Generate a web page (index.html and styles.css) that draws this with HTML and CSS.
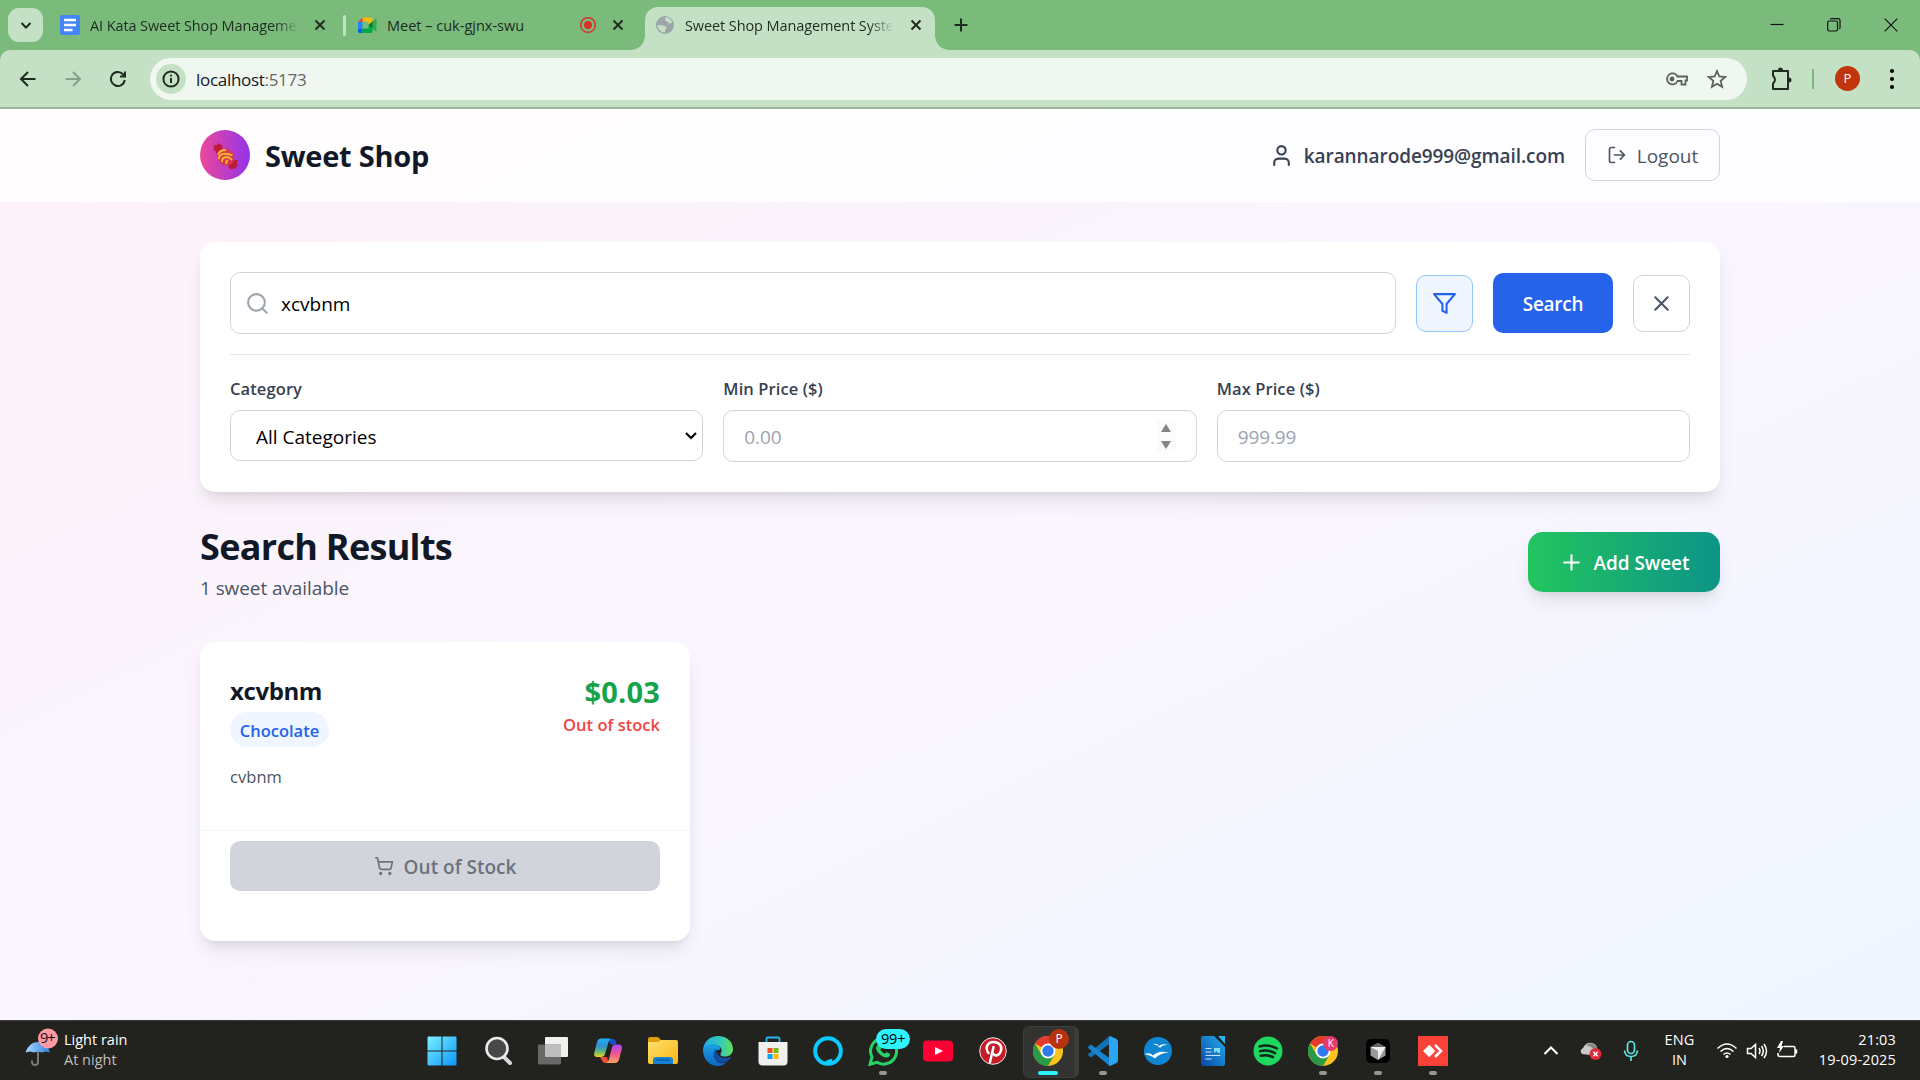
FILE: index.html
```html
<!DOCTYPE html>
<html lang="en">
<head>
<meta charset="utf-8">
<title>Sweet Shop Management System</title>
<link rel="stylesheet" href="styles.css">
</head>
<body>
<svg class="defs" width="0" height="0">
  <defs>
    <symbol id="x" viewBox="0 0 24 24"><path d="M18 6 6 18M6 6l12 12"/></symbol>
    <symbol id="chrome" viewBox="0 0 30 30">
      <circle cx="15" cy="15" r="15" fill="#fcc31e"/>
      <path d="M15 15 2 7.5A15 15 0 0 1 28 7.5H15Z" fill="#e33b2e"/>
      <path d="M2 7.5A15 15 0 0 0 15 30L21.500 18.750 15 15 8.500 18.750Z" fill="#2a9a47"/>
      <circle cx="15" cy="15" r="7.500" fill="#fff"/>
      <circle cx="15" cy="15" r="5.700" fill="#3079ee"/>
    </symbol>
  </defs>
</svg>

<div class="tabstrip">
  <button class="tab-search"><svg width="20" height="20" viewBox="0 0 20 20" class="dark"><path d="m5.500 8 4.500 4.500L14.500 8"/></svg></button>
  <div class="tab tab-docs">
    <svg width="20" height="20" viewBox="0 0 20 20"><rect width="20" height="20" rx="2" fill="#4285f4"/><path d="M4 5h12M4 10h12M4 15h8.500" stroke="#fff" stroke-width="2.400"/></svg>
    <span class="tab-title fade">AI Kata Sweet Shop Manageme</span>
    <svg class="close dark" width="18" height="18"><use href="#x"/></svg>
  </div>
  <i class="tab-sep"></i>
  <div class="tab tab-meet">
    <svg width="20" height="18" viewBox="0 0 20 18"><path d="M4.500 1.500H13q1.500 0 1.500 1.500v4l-4 2V5.500h-6z" fill="#fbbc04"/><path d="M0 6 4.500 1.500V6z" fill="#ea4335"/><path d="M0 6h4.500v7H0z" fill="#2684fc"/><path d="M0 13h4.500v4H1.500Q0 17 0 15.500z" fill="#0066da"/><path d="M4.500 12.500h6V9l4 3v3.500q0 1.500-1.500 1.500H4.500z" fill="#00ac47"/><path d="m10.500 9 7-6q1-.700 1 .500v11q0 1.200-1 .500z" fill="#34a853"/><path d="m10.500 9 4-3.500v7z" fill="#00832d"/></svg>
    <span class="tab-title">Meet – cuk-gjnx-swu</span>
    <svg width="18" height="18" viewBox="0 0 18 18"><circle cx="9" cy="9" r="7.300" fill="none" stroke="#d93025" stroke-width="1.500"/><circle cx="9" cy="9" r="4" fill="#d93025"/></svg>
    <svg class="close dark" width="18" height="18"><use href="#x"/></svg>
  </div>
  <div class="tab tab-active">
    <svg width="20" height="20" viewBox="0 0 20 20"><circle cx="10" cy="10" r="9" fill="#9ca5a8"/><path d="M10.500 2c3 0 6 2.500 6.800 6-1.500-.500-1.800 1-3.300.500-1.200-.500-.500-2-2-2S9.500 5 10.500 4zM2.500 10l5 .300c1.500 0 2 1 3 1.500s1.500 1.200.500 2.200-1 1-1 3.500C6 17.500 2.800 14.500 2.500 10z" fill="#c5e1c5"/></svg>
    <span class="tab-title fade">Sweet Shop Management Syste</span>
    <svg class="close dark" width="18" height="18"><use href="#x"/></svg>
  </div>
  <svg class="new-tab dark" width="20" height="20" viewBox="0 0 20 20"><path d="M10 3.500v13M3.500 10h13"/></svg>
  <div class="window-controls">
    <svg width="14" height="14" viewBox="0 0 14 14"><path d="M.500 6.500h13"/></svg>
    <svg width="14" height="14" viewBox="0 0 14 14"><rect x=".700" y="3" width="9.800" height="10" rx="1.500"/><path d="M3 1Q3.500.700 4.500.700H11q2 0 2 2V9.500q0 1-.500 1.500"/></svg>
    <svg width="14" height="14" viewBox="0 0 14 14"><path d="m.700.700 12.600 12.600M13.300.700.700 13.300"/></svg>
  </div>
</div>

<div class="toolbar">
  <div class="nav">
    <svg class="dark" width="20" height="20" viewBox="0 0 20 20"><path d="M17.500 10H3.500M10 3l-7 7 7 7"/></svg>
    <svg class="muted" width="20" height="20" viewBox="0 0 20 20"><path d="M2.500 10h14M10 3l7 7-7 7"/></svg>
    <svg class="dark" width="20" height="20" viewBox="0 0 20 20"><path d="M16.800 11A7 7 0 1 1 15 5.200l1.500 1.800M17 2.500V7.500H12"/></svg>
  </div>
  <div class="omnibox">
    <span class="site-info"><svg class="dark" width="20" height="20" viewBox="0 0 20 20"><circle cx="10" cy="10" r="7.600"/><path d="M10 9v5M10 5.800v1.700"/></svg></span>
    <span class="url">localhost<em>:5173</em></span>
    <svg class="grey" width="24" height="20" viewBox="0 0 24 20"><path d="M12.500 7.500H22V11.500H20.500V15.500H16.500V12H12.600A5.500 5.500 0 1 1 12.500 7.500Z"/><circle cx="7" cy="10" r="1.500" fill="#5a635b"/></svg>
    <svg class="grey star" width="20" height="20" viewBox="0 0 20 20"><path d="m10 2 2.300 5.500 6 .500-4.600 3.900 1.400 5.900L10 14.700l-5.100 3.100 1.400-5.900L1.700 8l6-.500z"/></svg>
  </div>
  <svg class="dark puzzle" width="24" height="28" viewBox="0 0 24 28"><path d="M4 6h15v18H4v-5.500q4-3.500 0-8z" stroke-linejoin="round"/><path d="M9 5a2.500 2.500 0 0 1 5 0zM20 12.500a2.500 2.500 0 0 1 0 5z" fill="#1f2b20" stroke="none"/></svg>
  <i class="bar-sep"></i>
  <span class="profile">P</span>
  <svg width="6" height="24" viewBox="0 0 6 24"><circle cx="3" cy="4" r="2.100"/><circle cx="3" cy="12" r="2.100"/><circle cx="3" cy="20" r="2.100"/></svg>
</div>

<div class="page">
  <header class="site-header">
    <div class="container header-row">
      <div class="brand">
        <span class="logo"><svg width="28" height="30" viewBox="0 0 28 30">
          <path d="m9.500 14-5-.500.500-2.500-3-1 1.500-2.500L2.500 5 6 5.200 7 3l2.500 1.500L11.500 5l-.500 2.500 2 3zM19 20.500l7.500-.500-.700 3.500 1 2-1.500 1.500-1.300 2-2.500-.500-2.500 1-1.500-3z" fill="#be1a3a"/>
          <ellipse cx="14.700" cy="17" rx="9.200" ry="8" transform="rotate(45 14.700 17)" fill="#d9354c"/>
          <path d="M7 14.500q1.500-4.500 8-4.500M7.700 19.200q.300-5.500 6.300-5.500 4.500 0 7.500 1.800M11 22q-.500-4.500 4.500-5 3 0 5.500 3M15.500 24q-1-3 1.500-3.500" fill="none" stroke="#f9b836" stroke-width="1.900"/></svg></span>
        <h1>Sweet Shop</h1>
      </div>
      <div class="account">
        <svg class="icon" width="25" height="25" viewBox="0 0 24 24"><path d="M19 21v-2a4 4 0 0 0-4-4H9a4 4 0 0 0-4 4v2"/><circle cx="12" cy="7" r="4"/></svg>
        <span class="email">karannarode999@gmail.com</span>
        <button class="logout"><svg class="icon" width="20" height="20" viewBox="0 0 24 24"><path d="M9 21H5a2 2 0 0 1-2-2V5a2 2 0 0 1 2-2h4M16 17l5-5-5-5M21 12H9"/></svg><span>Logout</span></button>
      </div>
    </div>
  </header>

  <main class="container">
    <section class="card search-card">
      <div class="search-row">
        <label class="field search-field">
          <svg class="icon" width="25" height="25" viewBox="0 0 24 24"><circle cx="11" cy="11" r="8"/><path d="m21 21-4.300-4.300"/></svg>
          <span>xcvbnm</span>
        </label>
        <button class="square filter"><svg class="icon" width="25" height="25" viewBox="0 0 24 24"><path d="M22 3H2l8 9.460V19l4 2v-8.540L22 3z"/></svg></button>
        <button class="search-btn">Search</button>
        <button class="square"><svg class="icon" width="25" height="25"><use href="#x"/></svg></button>
      </div>
      <div class="filters">
        <div><label>Category</label><div class="field select"><span>All Categories</span><svg width="14" height="10" viewBox="0 0 14 10"><path d="m2 2 5 5 5-5" fill="none" stroke="#000" stroke-width="2.200"/></svg></div></div>
        <div><label>Min Price ($)</label><div class="field number"><span>0.00</span><i class="spinner"></i></div></div>
        <div><label>Max Price ($)</label><div class="field number"><span>999.99</span></div></div>
      </div>
    </section>

    <section class="results-head">
      <div>
        <h2>Search Results</h2>
        <p>1 sweet available</p>
      </div>
      <button class="add"><svg class="icon" width="25" height="25" viewBox="0 0 24 24"><path d="M5 12h14M12 5v14"/></svg><span>Add Sweet</span></button>
    </section>

    <article class="card product">
      <div class="product-body">
        <div class="product-top">
          <div><h3>xcvbnm</h3><span class="badge">Chocolate</span></div>
          <div class="price-col"><b>$0.03</b><span>Out of stock</span></div>
        </div>
        <p>cvbnm</p>
      </div>
      <div class="product-foot">
        <button class="buy"><svg class="icon" width="20" height="20" viewBox="0 0 24 24"><circle cx="8" cy="21" r="1"/><circle cx="19" cy="21" r="1"/><path d="M2.050 2.050h2l2.660 12.420a2 2 0 0 0 2 1.580h9.780a2 2 0 0 0 1.950-1.570l1.650-7.430H5.120"/></svg><span>Out of Stock</span></button>
      </div>
    </article>
  </main>
</div>

<footer class="taskbar">
  <div class="weather">
    <svg width="36" height="40" viewBox="0 0 36 40"><defs><linearGradient id="um"><stop stop-color="#a8d8ff"/><stop offset="1" stop-color="#2a83dc"/></linearGradient></defs><path d="M14 20v14a3 3 0 0 1-6 0v-1.500" fill="none" stroke="#77797a" stroke-width="2"/><path d="M1.500 24.500C4 17 9 14 14 14s10 3 12 10.500l-4-1-4 1-4-1-4 1-4-1z" fill="url(#um)"/><circle cx="24" cy="10.500" r="10" fill="#ff99a4"/></svg>
    <span class="weather-count">9+</span>
    <div class="weather-text"><span>Light rain</span><span class="dim">At night</span></div>
  </div>

  <div class="apps">
    <span class="app"><svg width="30" height="30" viewBox="0 0 30 30"><defs><linearGradient id="win" gradientUnits="userSpaceOnUse" x1="0" y1="0" x2="30" y2="30"><stop stop-color="#7df3ff"/><stop offset="1" stop-color="#0a93fb"/></linearGradient></defs><path d="M.500 1.500q0-1 1-1h13v14H.500zM15.500.500h13q1 0 1 1v13h-14zM.500 15.500h14v14h-13q-1 0-1-1zM15.500 15.500h14v13q0 1-1 1h-13z" fill="url(#win)"/></svg></span>
    <span class="app"><svg width="30" height="30" viewBox="0 0 30 30"><path d="m20 20 7 7" stroke="#d5d9dc" stroke-width="4" stroke-linecap="round"/><circle cx="14" cy="12.500" r="10.500" fill="#484848" stroke="#e9ecee" stroke-width="2.600"/></svg></span>
    <span class="app"><svg width="30" height="30" viewBox="0 0 30 30"><rect x="7" y="1" width="23" height="20" rx="1" fill="#f0f0f0"/><rect y="8.500" width="23" height="20" rx="1" fill="#686868"/><path d="M7 8.500h15q1 0 1 1V21H8q-1 0-1-1z" fill="#bdbdbd"/></svg></span>
    <span class="app"><svg width="30" height="30" viewBox="0 0 30 30"><defs><linearGradient id="cpa" x1="0" y1="0" x2="0" y2="1"><stop stop-color="#18b3ef"/><stop offset=".4" stop-color="#3490d6"/><stop offset=".7" stop-color="#5bb878"/><stop offset="1" stop-color="#f2d21c"/></linearGradient><linearGradient id="cpb" x1="0" y1="0" x2="0" y2="1"><stop stop-color="#a54bf3"/><stop offset=".5" stop-color="#ee5692"/><stop offset="1" stop-color="#ffa45a"/></linearGradient></defs><path d="M15 3h5q2 0 2.600 2l1 3.500h-6z" fill="#1c50cf"/><path d="M7 21h7l1.500 6h-3.500q-2 0-2.600-2z" fill="#ef4c3c"/><path d="M8 2.500h10q-1.500.500-2.300 3L12 18q-.900 3-4 3H4Q.500 21 1.200 17L4 6Q5 2.500 8 2.500z" fill="url(#cpa)"/><path d="M22.500 8.500H26q3.500 0 2.900 4L26.200 23q-1 4-4.200 4H13q2-.500 2.700-3L19 11.500q.800-3 3.500-3z" fill="url(#cpb)"/></svg></span>
    <span class="app"><svg width="30" height="30" viewBox="0 0 30 30"><defs><linearGradient id="fo" x1="0" y1="0" x2="1" y2="1"><stop stop-color="#ffdf72"/><stop offset="1" stop-color="#fbb810"/></linearGradient></defs><path d="M0 3q0-2 2-2h8l3 3v7H0z" fill="#df9d08"/><path d="M0 6h10l3-2h15q2 0 2 2v20q0 2-2 2H2q-2 0-2-2z" fill="url(#fo)"/><path d="M5 28v-4q0-3 3-3h14q3 0 3 3v4z" fill="#1680d4"/><path d="M8.500 24h13" stroke="#0a559e" stroke-width="1.300"/></svg></span>
    <span class="app"><svg width="30" height="30" viewBox="0 0 30 30"><defs><linearGradient id="ea"><stop stop-color="#25a9e4"/><stop offset=".6" stop-color="#35cbbb"/><stop offset="1" stop-color="#66e052"/></linearGradient><linearGradient id="eb" x1="0" y1="0" x2="0" y2="1"><stop stop-color="#1ba3e2"/><stop offset="1" stop-color="#0c65c6"/></linearGradient></defs><path d="M0 14C1 5 7 0 15 0c9 0 15 6 15 13 0 5-4 7.500-8 7.500-4 0-5.500-1.500-4-3.500C20 13 17 9 12 9 6 9 1 12 0 14z" fill="url(#ea)"/><path d="M0 14C1 10 6 7.500 11 8c5 .500 7 4 6 6-3-1-7 2-5 8 1.500 5 7 6 11 5-3 2-5 3-8 3C6 30 0 23 0 14z" fill="url(#eb)"/><path d="M13 13c-4 4-3 9 1 12s10 2 13.500-2.500c.800-1 .200-1.800-1-1.300-6 2.600-13-.700-13.500-8.200z" fill="#124f9f"/></svg></span>
    <span class="app"><svg width="30" height="30" viewBox="0 0 30 30"><path d="M8.500 7V2.500q0-1 1-1h11q1 0 1 1V7" fill="none" stroke="#28b4ef" stroke-width="1.800"/><path d="M.500 6h29v19.500q0 4-4 4h-21q-4 0-4-4z" fill="#f0f0f0"/><path d="M9.500 12h5v5h-5z" fill="#f25022"/><path d="M15.500 12h5v5h-5z" fill="#7fba00"/><path d="M9.500 18h5v5h-5z" fill="#00a4ef"/><path d="M15.500 18h5v5h-5z" fill="#ffb900"/></svg></span>
    <span class="app"><svg width="30" height="30" viewBox="0 0 30 30"><circle cx="15" cy="15" r="12.800" fill="none" stroke="#0bcaff" stroke-width="4"/><path d="M12.500 29.500V26q0-1.500 2-2l5-1.500-1 5.500z" fill="#0bcaff"/></svg></span>
    <span class="app open"><svg width="30" height="30" viewBox="0 0 30 30"><path d="M2 28.300 4 21A13 13 0 1 1 9 26.300z" fill="none" stroke="#26d367" stroke-width="3"/><path d="M10 8.500c1-1 2-.500 2.500.500l1 2.500c.200.800-.800 1.500-1.200 2 1 2 2.500 3.300 4.500 4.200.500-.500 1.200-1.700 2-1.500l3 1.500c1 .600-.500 3.500-2.500 3.800C14 22 7.500 15 8 11.500Q8.500 9.500 10 8.500z" fill="#26d367"/></svg><b class="count">99+</b></span>
    <span class="app"><svg width="30" height="30" viewBox="0 0 30 30"><rect y="4.500" width="30" height="21" rx="4" fill="#ff0033"/><path d="m12 11 8 4-8 4z" fill="#fff"/></svg></span>
    <span class="app"><svg width="30" height="30" viewBox="0 0 30 30"><circle cx="15" cy="15" r="13.300" fill="#c31d27" stroke="#f3e7e7" stroke-width="1"/><path d="M10.500 17c-4-5-1-11 5-11 6.500 0 9 5 7.200 9.500-1.500 4-5.500 5-7.200 2.500M15.500 11l-3.500 15" fill="none" stroke="#fff" stroke-width="2.500" stroke-linecap="round"/></svg></span>
    <span class="app active"><svg width="30" height="30"><use href="#chrome"/></svg><b class="who who-p">P</b></span>
    <span class="app open"><svg width="30" height="30" viewBox="0 0 30 30"><path d="m22 7.500-19 14-2.500-2q-.800-1 0-1.800L21 .500z" fill="#1272b8"/><path d="m22 22.500-19-14-2.500 2q-.800 1 0 1.800L21 29.500z" fill="#1585cf"/><path d="M22 0q-1 .200-1 1v28q0 .800 1 1l6.500-3q1.500-.800 1.500-2.500V5.500Q30 4 28.500 3z" fill="#2ba4f2"/></svg></span>
    <span class="app"><svg width="30" height="30" viewBox="0 0 30 30"><circle cx="15" cy="15" r="14" fill="#1085d1"/><path d="M10 8q4-1 6 2 3-3 9-1-6-.500-8 3-2-3-7-4zM1 18q6-2 9 1.500Q15 14 26 16.500q-9 .500-14 6Q8 19 1 18z" fill="#fff"/></svg></span>
    <span class="app"><svg width="30" height="30" viewBox="0 0 30 30"><defs><linearGradient id="wr" x1="0" y1="1" x2="1" y2="0"><stop stop-color="#0a47a8"/><stop offset="1" stop-color="#23aeea"/></linearGradient></defs><path d="M3 2q0-2 2-2h11l11 11v17q0 2-2 2H5q-2 0-2-2z" fill="url(#wr)"/><path d="M20 0h7v8z" fill="#25b8f0"/><path d="M7.500 12.500h6M7.500 16h6M7.500 19.500h15M7.500 23h6" stroke="#cbe5fa" stroke-width="1.200"/><path d="M16 12h6v5h-1.500l-2-2-2.500 2z" fill="#82dcf5"/></svg></span>
    <span class="app"><svg width="30" height="30" viewBox="0 0 30 30"><circle cx="15" cy="15" r="14.500" fill="#1ed760"/><path d="M6.500 10.500q9-2.500 17.500 2M7 15.200q8-2 15 2M7.700 19.700q7-1.500 12.300 1.500" fill="none" stroke="#13261a" stroke-width="2.500" stroke-linecap="round"/></svg></span>
    <span class="app open"><svg width="30" height="30"><use href="#chrome"/></svg><b class="who who-k">K</b></span>
    <span class="app open"><svg width="30" height="30" viewBox="0 0 30 30"><rect x="3" y="3" width="24" height="24" rx="5" fill="#000"/><path d="m15 7 7.500 4v8.500L15 24l-7.500-4.500V11z" fill="#9a9a9a"/><path d="M7.500 11h15L15 24v-9z" fill="#eee"/><path d="m7.500 11 7.500-4 7.500 4z" fill="#666"/></svg></span>
    <span class="app open"><svg width="30" height="30" viewBox="0 0 30 30"><path d="M0 0h30v30H0z" fill="#fa4238"/><path d="m5 15 6.200-6.200 6.200 6.200-6.200 6.200z" fill="#fff"/><path d="m17 9 6 6-6 6" fill="none" stroke="#fff" stroke-width="2.500"/></svg></span>
  </div>

  <div class="tray">
    <svg class="glyph" width="16" height="10" viewBox="0 0 16 10"><path d="m1.500 8 6.500-6.500L14.500 8" stroke-width="2"/></svg>
    <svg width="24" height="20" viewBox="0 0 24 20"><path d="M3 13q-3-4 1-6Q7 1 13 2q5 1 5 6l-7 6z" fill="#c9c9c9"/><path d="M7 4q6-4 10 1 2 2 1 5l-6-4z" fill="#868686"/><circle cx="16.500" cy="13" r="6" fill="#e02a35"/><path d="m14.300 10.800 4.400 4.400m0-4.400-4.400 4.400" stroke="#fff" stroke-width="1.500"/></svg>
    <svg class="mic" width="16" height="22" viewBox="0 0 16 22"><rect x="4.500" y="1.500" width="7" height="12" rx="3.500"/><path d="M1.500 10.500q.500 6 6.500 6t6.500-6M8 16.500V21"/></svg>
    <div class="lang"><span>ENG</span><span>IN</span></div>
    <svg class="glyph" width="22" height="18" viewBox="0 0 22 18"><path d="M1.500 6.500q9.500-9 19 0M4.500 9.500q6.500-6 13 0M7.500 12.500q3.500-3 7 0"/><circle cx="11" cy="14.500" r="1.600" fill="#fff" stroke="none"/></svg>
    <svg class="glyph" width="22" height="18" viewBox="0 0 22 18"><path d="M1.500 6.500v5H5l4.500 4V2.500L5 6.500zM13 6q2 3 0 6M15.500 4q3.500 5 0 10M18 2q5 7 0 14"/></svg>
    <svg class="glyph" width="22" height="20" viewBox="0 0 22 20"><path d="M8 5.500h9.500q1.500 0 1.500 1.500v7q0 1.500-1.500 1.500H4q-2 0-2-2V12M20.500 8.500v4"/><path d="M5 0 1 7h3l-1 5 5-7H5.500L7 0z" fill="#fff" stroke="none"/></svg>
    <div class="clock"><span>21:03</span><span>19-09-2025</span></div>
  </div>
</footer>
</body>
</html>
```
FILE: styles.css
```css
* { box-sizing: border-box; margin: 0; }
body {
  width: 1920px;
  height: 1080px;
  overflow: hidden;
  display: grid;
  grid-template-rows: 50px 59px 911px 60px;
  grid-template-columns: 1920px;
  background: #7abb7c;
  font-family: "Open Sans", "Noto Sans", sans-serif;
  font-size: 19px;
  line-height: 30px;
  color: #111827;
}
.defs { position: absolute; }
svg { flex: none; display: block; }
button { font: inherit; border: 0; padding: 0; display: flex; align-items: center; justify-content: center; }
span, h1, h2, h3, label { white-space: nowrap; }
.dark, .muted, .grey { fill: none; stroke: #1f2b20; stroke-width: 2; }
.muted { stroke: #86a187; }
.grey { stroke: #5a635b; stroke-width: 1.800; }

/* Browser tabs */
.tabstrip { display: flex; align-items: center; background: #7abb7c; padding-left: 8px; }
.tab-search { width: 35px; height: 34px; border-radius: 11px; background: #c5e1c5; }
.tab { display: flex; align-items: center; height: 43px; color: #1f2b20; }
.tab-title { flex: 1; margin-left: 10px; padding-top: 2px; font-size: 14.500px; letter-spacing: -.1px; }
.fade { -webkit-mask-image: linear-gradient(90deg, #000 88%, transparent); mask-image: linear-gradient(90deg, #000 88%, transparent); }
.close { margin-left: 11px; stroke-width: 2.600; }
.tab-docs { width: 269px; margin-left: 17px; }
.tab-sep { width: 3px; height: 21px; margin: 0 12px 0 14px; border-radius: 2px; background: #c5e1c5; }
.tab-meet { width: 269px; }
.tab-meet .tab-title { letter-spacing: 0; margin-left: 9px; }
.tab-meet .close { margin-left: 12px; }
.tab-active {
  position: relative;
  align-self: flex-end;
  width: 290px;
  margin-left: 18px;
  padding: 0 11px 7px 10px;
  border-radius: 13px 13px 0 0;
  background: #c5e1c5;
}
.tab-active .close { margin-left: 13px; }
.tab-active::before, .tab-active::after { content: ""; position: absolute; bottom: 0; width: 14px; height: 14px; }
.tab-active::before { left: -14px; background: radial-gradient(circle at 0 0, transparent 13.500px, #c5e1c5 14px); }
.tab-active::after { right: -14px; background: radial-gradient(circle at 100% 0, transparent 13.500px, #c5e1c5 14px); }
.new-tab { margin-left: 16px; }
.window-controls { display: flex; gap: 43px; margin: 0 22px 0 auto; fill: none; stroke: #111; stroke-width: 1.200; }

/* Browser toolbar */
.toolbar {
  display: flex;
  align-items: center;
  padding: 0 25px 0 17px;
  border-bottom: 2px solid #9cb49c;
  border-radius: 10px 10px 0 0;
  background: #c5e1c5;
}
.nav { display: flex; gap: 25px; width: 133px; padding-left: 1px; }
.omnibox { display: flex; align-items: center; width: 1597px; height: 42px; padding: 0 20px 0 6px; border-radius: 21px; background: #f0f7f0; }
.site-info { display: grid; place-items: center; width: 30px; height: 30px; border-radius: 50%; background: #c5e1c5; }
.url { margin: 0 auto 0 10px; padding-top: 2px; font-size: 17px; letter-spacing: -.3px; }
.url em { font-style: normal; color: #5f6b61; }
.star { margin-left: 18px; }
.puzzle { margin-left: 22px; }
.bar-sep { width: 2px; height: 20px; margin: 0 21px 0 19px; background: #7abb7c; }
.profile { width: 25px; height: 25px; margin-right: 29px; border-radius: 50%; background: #c0350c; color: #fff; font-size: 13px; line-height: 25px; text-align: center; }

/* Shop page */
.page { background: linear-gradient(to bottom right, #fdf2f8, #faf5ff 50%, #eff6ff); }
.container { width: 1520px; margin: 0 auto; }
.icon { fill: none; stroke: currentColor; stroke-width: 2; stroke-linecap: round; stroke-linejoin: round; }
.site-header { background: rgba(255, 255, 255, .8); height: 93px; }
.header-row { display: flex; align-items: center; justify-content: space-between; height: 92px; }
.brand { display: flex; align-items: center; gap: 15px; }
.logo { display: grid; place-items: center; width: 50px; height: 50px; border-radius: 50%; background: linear-gradient(90deg, #ec4899, #9333ea); }
h1 { padding-top: 2px; font-size: 29px; line-height: 40px; letter-spacing: -.25px; }
.account { display: flex; align-items: center; color: #374151; }
.email { margin: 0 20px 0 10px; font-weight: 600; letter-spacing: -.08px; }
.email, .logout span, .add span, .buy span, .field span, .search-btn { padding-top: 2px; }
.logout { gap: 10px; width: 135px; height: 52px; border: 1px solid #d1d5db; border-radius: 10px; background: transparent; color: #4b5563; }

.card { background: #fff; border-radius: 15px; box-shadow: 0 12px 19px -4px rgba(0, 0, 0, .1), 0 5px 8px -5px rgba(0, 0, 0, .1); }
.search-card { height: 250px; margin-top: 40px; padding: 30px; }
.search-row { display: flex; align-items: center; gap: 20px; }
.field { display: flex; align-items: center; border: 1px solid #d1d5db; border-radius: 10px; background: #fff; color: #000; }
.search-field { flex: 1; height: 62px; padding-left: 14px; gap: 11px; color: #000; }
.search-field .icon { color: #9ca3af; }
.square { width: 57px; height: 57px; border: 1px solid #d1d5db; border-radius: 10px; background: #fff; color: #4b5563; }
.filter { border-color: #93c5fd; background: #eff6ff; color: #2563eb; }
.search-btn { width: 120px; height: 60px; border-radius: 10px; background: #2563eb; color: #fff; font-weight: 600; letter-spacing: -.3px; }
.filters { display: grid; grid-template-columns: repeat(3, 1fr); gap: 20px; margin-top: 20px; padding-top: 20px; border-top: 1px solid #e5e7eb; }
.filters label { display: block; padding-top: 1px; margin-bottom: 9px; font-size: 16.500px; line-height: 25px; font-weight: 600; letter-spacing: .1px; color: #374151; }
.select { justify-content: space-between; height: 51px; padding: 0 4px 0 25px; }
.number { justify-content: space-between; height: 52px; padding: 0 20px; color: #9ca3af; }
.number span { letter-spacing: -.1px; }
.spinner { display: flex; flex-direction: column; justify-content: space-between; align-items: center; width: 19px; height: 30px; padding: 3px 0 2px; background: #fbfbfb; }
.spinner::before, .spinner::after { content: ""; border: 5.500px solid transparent; border-width: 0 5.500px 8px; border-bottom-color: #858585; }
.spinner::after { border-width: 8px 5.500px 0; border-top-color: #858585; }

.results-head { display: flex; align-items: center; justify-content: space-between; margin: 30px 0 40px; height: 80px; }
h2 { padding-top: 3px; font-size: 36px; line-height: 45px; margin-bottom: 4px; letter-spacing: -.7px; }
.results-head p { color: #4b5563; letter-spacing: -.08px; }
.add { gap: 10px; width: 192px; height: 60px; border-radius: 15px; background: linear-gradient(90deg, #22c55e, #0d9488); color: #fff; font-weight: 600; letter-spacing: -.08px; box-shadow: 0 12px 19px -4px rgba(0, 0, 0, .1), 0 5px 8px -5px rgba(0, 0, 0, .1); }

.product { width: 490px; height: 299px; }
.product-body { height: 189px; padding: 30px; border-bottom: 1px solid #f3f4f6; }
.product-top { display: flex; justify-content: space-between; }
h3 { font-size: 24px; line-height: 35px; margin: 1px 0 4px; letter-spacing: -.4px; }
.badge { display: block; width: 99px; height: 35px; border-radius: 18px; background: #eff6ff; color: #2563eb; font-size: 16.500px; font-weight: 600; line-height: 37px; text-align: center; letter-spacing: 0; }
.price-col { display: flex; flex-direction: column; align-items: flex-end; font-size: 16.500px; font-weight: 600; color: #ef4444; line-height: 25px; }
.price-col b { color: #16a34a; font-size: 29px; font-weight: 700; line-height: 40px; letter-spacing: .2px; }
.product p { margin-top: 15px; color: #4b5563; font-size: 16.500px; letter-spacing: .05px; }
.product-foot { padding: 10px 30px; }
.buy { width: 100%; height: 50px; gap: 10px; border-radius: 10px; background: #d1d5db; color: #6b7280; font-weight: 600; }

/* Windows taskbar */
.taskbar { display: flex; align-items: center; background: #22221e; border-top: 1px solid #3b3b39; color: #fff; font-size: 14.500px; line-height: 20px; }
.weather { position: relative; display: flex; width: 414px; padding-left: 24px; gap: 4px; }
.weather > svg { margin-top: -2px; }
.weather-count { position: absolute; left: 40px; top: -2px; color: #111; letter-spacing: -1px; }
.weather-text, .lang, .clock { display: flex; flex-direction: column; padding-bottom: 2px; }
.dim { color: #bfbfbd; }
.apps { display: flex; }
.app { position: relative; display: grid; place-items: center; width: 55.030px; height: 50px; }
.app:first-child { margin-right: 1px; }
.open::after, .active::after { content: ""; position: absolute; bottom: 1px; left: calc(50% - 4px); width: 8px; height: 4px; border-radius: 2px; background: #969694; }
.active::after { left: calc(50% - 10px); width: 20px; background: #2df1ff; }
.active::before { content: ""; position: absolute; left: 3px; top: 0; width: 50px; height: 50px; border: 1px solid #3c3c3a; border-right-width: 5px; border-radius: 6px; background: #333332; z-index: -1; }
.active { z-index: 0; }
.count { position: absolute; left: 21px; top: 3px; width: 34px; height: 20px; border-radius: 10px; background: #2ef2ff; color: #000; font-weight: 400; text-align: center; letter-spacing: -.2px; }
.who { position: absolute; left: 29px; top: 3px; width: 20px; height: 20px; border-radius: 50%; background: #b93210; color: #fff; font-size: 12px; font-weight: 400; text-align: center; }
.who-k { left: 28px; width: 15px; height: 15px; line-height: 15px; top: 10px; font-size: 10px; background: #e23b70; }
.tray { display: flex; align-items: center; margin: 0 24px 0 auto; }
.glyph { fill: none; stroke: #fff; stroke-width: 1.500; margin-right: 8px; }
.tray > :nth-child(1) { margin-right: 20px; }
.tray > :nth-child(2) { margin-right: 20px; }
.mic { fill: none; stroke: #5be4e5; stroke-width: 1.700; margin-right: 24px; }
.lang { width: 33px; margin-right: 20px; text-align: center; letter-spacing: .1px; }
.clock { width: 90px; text-align: right; letter-spacing: .15px; }
```
